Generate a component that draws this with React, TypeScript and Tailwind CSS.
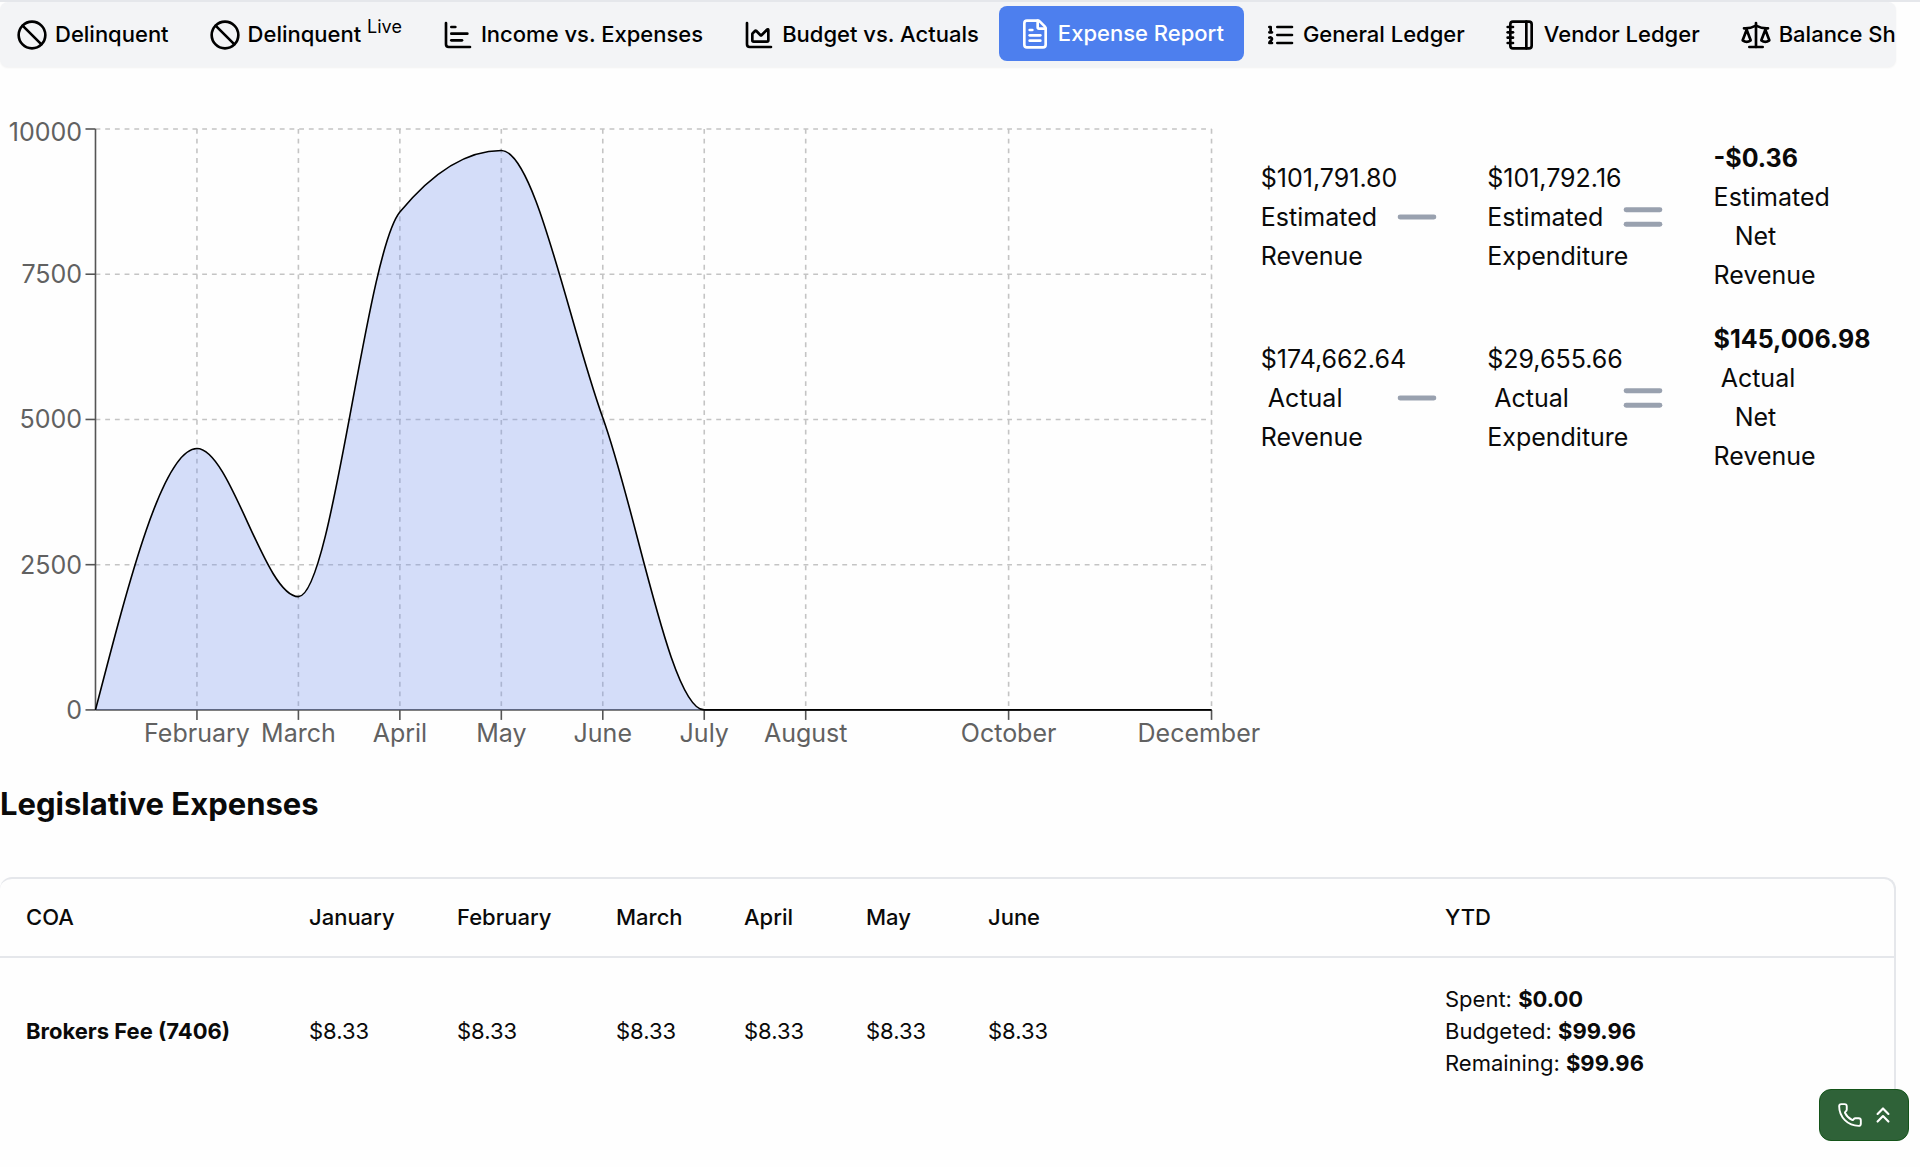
import { useState } from 'react';
import type { ReactNode } from 'react';
import {
  Ban,
  ChartArea,
  ChartBar,
  ChevronsUp,
  Equal,
  FileText,
  Minus,
  Notebook,
  Phone,
  Scale,
} from 'lucide-react';

const OrderedListIcon = ({ className }: { className?: string }) => (
  <svg
    className={className}
    viewBox="0 0 24 24"
    fill="none"
    stroke="currentColor"
    strokeWidth={2}
    strokeLinecap="round"
    strokeLinejoin="round"
  >
    <path d="M10 6h11M10 12h11M10 18h11M4 6h1v4M4 10h2M6 18H4c0-1 2-2 2-3s-1-1.5-2-1" />
  </svg>
);

const tabs: { id: string; label: ReactNode; icon: any }[] = [
  { id: 'delinquent', label: 'Delinquent', icon: Ban },
  {
    id: 'delinquent-live',
    label: (
      <>
        Delinquent <sup className="text-[18px] font-normal">Live</sup>
      </>
    ),
    icon: Ban,
  },
  { id: 'income', label: 'Income vs. Expenses', icon: ChartBar },
  { id: 'budget', label: 'Budget vs. Actuals', icon: ChartArea },
  { id: 'expense', label: 'Expense Report', icon: FileText },
  { id: 'general', label: 'General Ledger', icon: OrderedListIcon },
  { id: 'vendor', label: 'Vendor Ledger', icon: Notebook },
  { id: 'balance', label: 'Balance Sheet', icon: Scale },
];

const monthly = [
  { month: 'January', total: 0 },
  { month: 'February', total: 4500 },
  { month: 'March', total: 1950 },
  { month: 'April', total: 8570 },
  { month: 'May', total: 9630 },
  { month: 'June', total: 5030 },
  { month: 'July', total: 0 },
  { month: 'August', total: 0 },
  { month: 'September', total: 0 },
  { month: 'October', total: 0 },
  { month: 'November', total: 0 },
  { month: 'December', total: 0 },
];

const shownTicks = [1, 2, 3, 4, 5, 6, 7, 9, 11];
const yTicks = [0, 2500, 5000, 7500, 10000];

const plot = { left: 95.5, right: 1211.7, top: 22, bottom: 603 };

const xAt = (i: number) =>
  plot.left + ((plot.right - plot.left) * i) / (monthly.length - 1);
const yAt = (value: number) =>
  plot.bottom - ((plot.bottom - plot.top) * value) / 10000;

// Monotone cubic interpolation, so the curve never overshoots a month
const monotonePath = (points: number[][]) => {
  const n = points.length;
  const slopes = points
    .slice(1)
    .map(([x, y], i) => (y - points[i][1]) / (x - points[i][0]));
  const tangents = points.map((_, i) => {
    if (i === 0 || i === n - 1) return 0;
    const a = slopes[i - 1];
    const b = slopes[i];
    if (a * b <= 0) return 0;
    return Math.sign(a) * Math.min(Math.abs(a), Math.abs(b), Math.abs(a + b) / 4) * 2;
  });
  tangents[0] = (3 * slopes[0] - tangents[1]) / 2;
  tangents[n - 1] = (3 * slopes[n - 2] - tangents[n - 2]) / 2;

  let d = `M${points[0][0]},${points[0][1]}`;
  for (let i = 1; i < n; i++) {
    const [x0, y0] = points[i - 1];
    const [x1, y1] = points[i];
    const dx = (x1 - x0) / 3;
    d += `C${x0 + dx},${y0 + dx * tangents[i - 1]} ${x1 - dx},${
      y1 - dx * tangents[i]
    } ${x1},${y1}`;
  }
  return d;
};

const ExpenseChart = () => {
  const line = monotonePath(monthly.map((m, i) => [xAt(i), yAt(m.total)]));
  const area = `${line}L${plot.right},${plot.bottom}L${plot.left},${plot.bottom}Z`;

  return (
    <svg
      viewBox="0 0 1261 660"
      className="block w-full h-auto overflow-visible"
      role="img"
      aria-label="Expenses by month"
    >
      <g stroke="#c4c4c4" strokeWidth={1.6} strokeDasharray="4.85 4.85">
        {yTicks.slice(1).map((t) => (
          <line key={t} x1={plot.left} x2={plot.right} y1={yAt(t)} y2={yAt(t)} />
        ))}
        {shownTicks.map((i) => (
          <line key={i} x1={xAt(i)} x2={xAt(i)} y1={plot.top} y2={plot.bottom} />
        ))}
      </g>

      <g stroke="#555" strokeWidth={1.6}>
        <line x1={plot.left} x2={plot.right} y1={plot.bottom} y2={plot.bottom} />
        <line x1={plot.left} x2={plot.left} y1={plot.top} y2={plot.bottom} />
        {yTicks.map((t) => (
          <line key={t} x1={plot.left - 10} x2={plot.left} y1={yAt(t)} y2={yAt(t)} />
        ))}
        {shownTicks.map((i) => (
          <line key={i} x1={xAt(i)} x2={xAt(i)} y1={plot.bottom} y2={plot.bottom + 10} />
        ))}
      </g>

      <g className="fill-[#616161] text-[25px]">
        {yTicks.map((t) => (
          <text key={t} x={82} y={Math.max(yAt(t), 25) + 9} textAnchor="end">
            {t}
          </text>
        ))}
        {shownTicks.map((i) => (
          <text key={i} x={Math.min(xAt(i), 1199)} y={635} textAnchor="middle">
            {monthly[i].month}
          </text>
        ))}
      </g>

      <path d={area} fill="#7492f0" fillOpacity={0.3} />
      <path d={line} fill="none" stroke="#000" strokeWidth={1.6} />
    </svg>
  );
};

const summary = [
  {
    revenue: '$101,791.80',
    expenditure: '$101,792.16',
    net: '-$0.36',
    label: 'Estimated',
  },
  {
    revenue: '$174,662.64',
    expenditure: '$29,655.66',
    net: '$145,006.98',
    label: ' Actual',
  },
];

const months = [
  { name: 'January', width: 'w-[148px]' },
  { name: 'February', width: 'w-[159px]' },
  { name: 'March', width: 'w-[128px]' },
  { name: 'April', width: 'w-[122px]' },
  { name: 'May', width: 'w-[122px]' },
  { name: 'June', width: 'w-[457px]' },
];

const App = () => {
  const [active, setActive] = useState('expense');

  return (
    <div className="min-h-screen bg-[#fefefe] border-t-2 border-gray-200 pr-6 font-['Inter',sans-serif] text-[#0a0a0a]">
      <nav className="overflow-hidden rounded-lg bg-gray-100 shadow-xs">
        <div className="flex h-[65px] -ml-1 py-1">
          {tabs.map(({ id, label, icon: Icon }) => (
            <button
              key={id}
              type="button"
              onClick={() => setActive(id)}
              className={`flex shrink-0 items-center gap-[7px] px-5 text-[22px] font-medium whitespace-nowrap ${
                active === id
                  ? 'h-[55px] rounded-lg bg-[#4d7fee] text-white'
                  : 'h-[57px] text-black'
              }`}
            >
              <Icon className="size-8" />
              <span>{label}</span>
            </button>
          ))}
        </div>
      </nav>

      <section className="mt-10 flex">
        <div className="w-[66.5%]">
          <ExpenseChart />
        </div>

        <div className="mt-8 flex flex-1 flex-col gap-[25px] text-[25px] leading-[39px]">
          {summary.map((row) => (
            <div key={row.label} className="grid grid-cols-3 items-center gap-x-11">
              <div className="flex items-center">
                <p className="w-[127px] shrink-0 whitespace-pre">
                  {row.revenue}
                  <br />
                  {row.label}
                  <br />
                  Revenue
                </p>
                <Minus className="size-[58px] shrink-0 text-gray-400" />
              </div>
              <div className="flex items-center">
                <p className="w-[127px] shrink-0 whitespace-pre">
                  {row.expenditure}
                  <br />
                  {row.label}
                  <br />
                  Expenditure
                </p>
                <Equal className="size-[58px] shrink-0 text-gray-400" />
              </div>
              <p className="whitespace-pre">
                <strong className="font-bold">{row.net}</strong>
                <br />
                {row.label}
                <br />
                {'   Net'}
                <br />
                Revenue
              </p>
            </div>
          ))}
        </div>
      </section>

      <h2 className="mt-4 text-[31px] leading-[42px] font-bold">
        Legislative Expenses
      </h2>

      <div className="mt-[52px] rounded-xl border-r-2 border-t-2 border-gray-200">
        <table className="w-full table-fixed text-left text-[22px] leading-8">
          <thead>
            <tr className="h-[78px] border-b-2 border-gray-200">
              <th className="w-[283px] px-[26px] font-medium">COA</th>
              {months.map((m) => (
                <th key={m.name} className={`${m.width} px-[26px] font-medium`}>
                  {m.name}
                </th>
              ))}
              <th className="px-[26px] font-medium">YTD</th>
            </tr>
          </thead>
          <tbody>
            <tr className="h-[148px]">
              <td className="px-[26px] font-bold">Brokers Fee (7406)</td>
              {months.map((m) => (
                <td key={m.name} className="px-[26px]">
                  $8.33
                </td>
              ))}
              <td className="px-[26px]">
                <div>
                  Spent: <b className="font-bold">$0.00</b>
                </div>
                <div>
                  Budgeted: <b className="font-bold">$99.96</b>
                </div>
                <div>
                  Remaining: <b className="font-bold">$99.96</b>
                </div>
              </td>
            </tr>
          </tbody>
        </table>
      </div>

      {/* Call widget */}
      <button
        type="button"
        aria-label="Open phone"
        className="fixed right-[11px] bottom-[26px] flex h-[52px] items-center gap-[7px] rounded-xl border border-[#14541a] bg-[#2f6238] pr-3 pl-[17px] text-white"
      >
        <Phone className="size-[26px]" strokeWidth={1.75} />
        <ChevronsUp className="size-[26px]" />
      </button>
    </div>
  );
};

export default App;
